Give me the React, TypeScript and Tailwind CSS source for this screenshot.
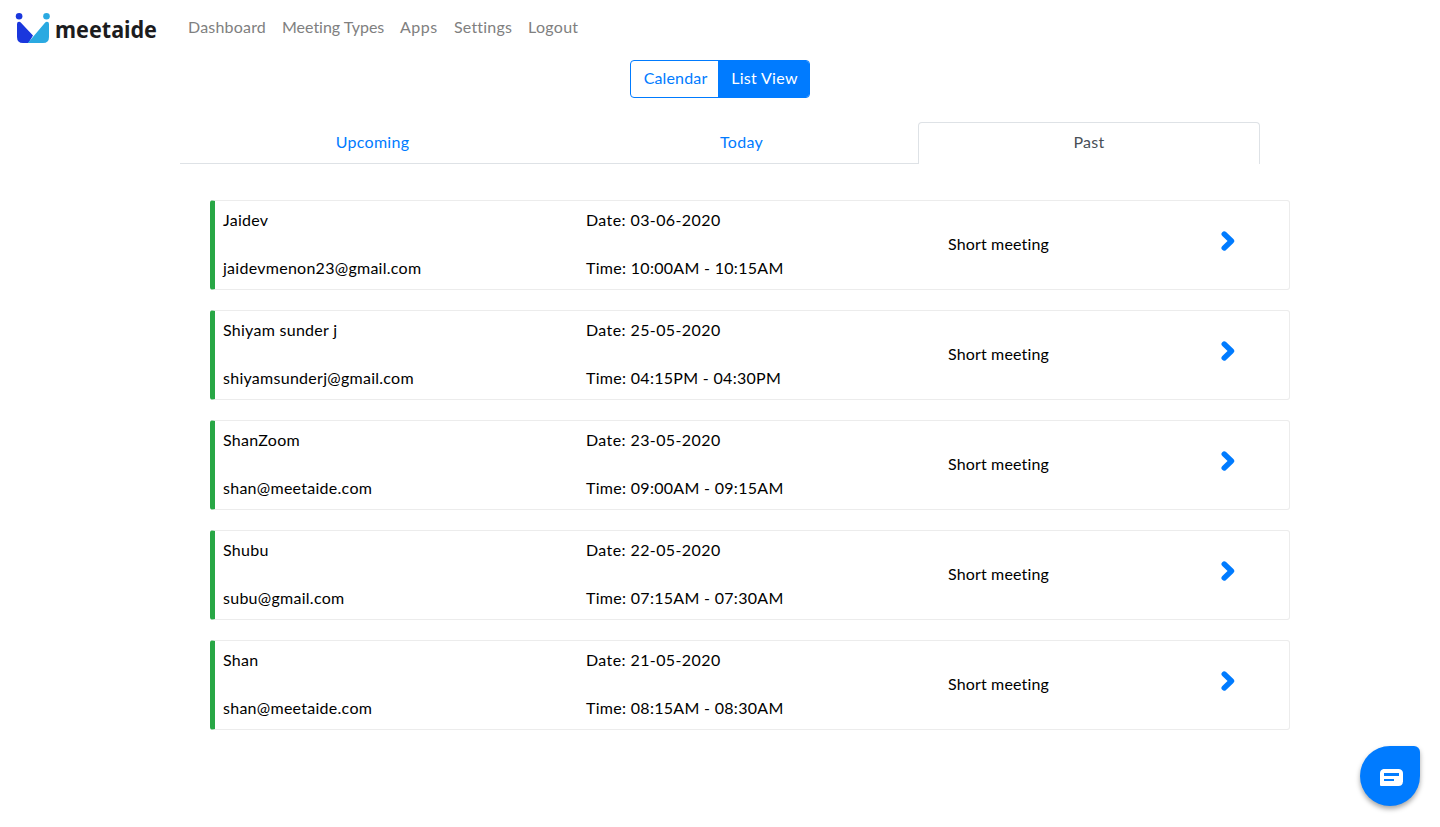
import clsx from "clsx";

const navLinks = [
  { label: "Dashboard", width: "w-[94px] tracking-[0.2px]" },
  { label: "Meeting Types", width: "w-[118px] tracking-[-0.02px]" },
  { label: "Apps", width: "w-[54px] tracking-[0.5px]" },
  { label: "Settings", width: "w-[74px] tracking-[0.2px]" },
  { label: "Logout", width: "w-[66px] tracking-[0.3px]" },
];

const tabs = [
  { label: "Upcoming", width: "w-[385px]" },
  { label: "Today", width: "w-[353px]" },
  { label: "Past", width: "w-[342px]", active: true },
];

const meetings = [
  { name: "Jaidev", email: "jaidevmenon23@gmail.com", date: "03-06-2020", time: "10:00AM - 10:15AM" },
  { name: "Shiyam sunder j", email: "shiyamsunderj@gmail.com", date: "25-05-2020", time: "04:15PM - 04:30PM" },
  { name: "ShanZoom", email: "shan@meetaide.com", date: "23-05-2020", time: "09:00AM - 09:15AM" },
  { name: "Shubu", email: "subu@gmail.com", date: "22-05-2020", time: "07:15AM - 07:30AM" },
  { name: "Shan", email: "shan@meetaide.com", date: "21-05-2020", time: "08:15AM - 08:30AM" },
];

function Logo() {
  return (
    <svg
      width="148"
      height="36"
      viewBox="0 0 148 36"
      className="overflow-visible"
      role="img"
      aria-label="meetaide"
    >
      <circle cx="4.1" cy="6.2" r="3.3" fill="#1a37dd" />
      <circle cx="31.5" cy="6.2" r="3.3" fill="#2aa9e1" />
      <path d="M2 14Q2 11.8 4 11.8Q5.3 11.8 6.2 13L18 25.5L13.5 33H8Q2 33 2 27Z" fill="#1a37dd" />
      <path d="M34 14Q34 11.8 32 11.8Q30.7 11.8 29.8 13L12.8 33H28Q34 33 34 27Z" fill="#2aa9e1" />
      <text
        x="40"
        y="27.5"
        textLength="102"
        lengthAdjust="spacingAndGlyphs"
        fill="#1c1c1e"
        className="font-['Noto_Sans',sans-serif] text-[23px] font-bold tracking-normal"
      >
        meetaide
      </text>
    </svg>
  );
}

function Navbar() {
  return (
    <nav className="flex h-14 items-center pl-[15px]">
      <a href="#" className="mr-[17px]">
        <Logo />
      </a>
      <ul className="flex pb-0.5 text-[#808080]">
        {navLinks.map((link) => (
          <li key={link.label} className={clsx("px-2 whitespace-nowrap", link.width)}>
            <a href="#">{link.label}</a>
          </li>
        ))}
      </ul>
    </nav>
  );
}

function ViewToggle() {
  return (
    <div className="mx-auto mt-1 flex h-[38px] w-[180px] overflow-hidden rounded border border-[#007bff]">
      <button className="w-[87px] pb-0.5 pl-0.5 tracking-[0.15px] text-[#007bff]">Calendar</button>
      <button className="flex-1 bg-[#007bff] pb-0.5 pl-0.5 text-white">List View</button>
    </div>
  );
}

function Tabs() {
  return (
    <div className="mx-auto mt-6 flex h-[42px] w-[1080px]">
      {tabs.map((tab) => (
        <button
          key={tab.label}
          className={clsx(
            "border-[#dee2e6]",
            tab.width,
            tab.active ? "rounded-t border border-b-0 pb-[3px] text-[#495057]" : "border-b pb-px text-[#007bff]"
          )}
        >
          {tab.label}
        </button>
      ))}
    </div>
  );
}

function MeetingCard({ name, email, date, time }: (typeof meetings)[number]) {
  return (
    <div className="flex h-[90px] rounded-[3px] border border-l-[5px] border-[#ececec] border-l-[#28a745] pl-2">
      <div className="flex w-[363px] flex-col gap-6 pt-[7px] tracking-[0.27px]">
        <p>{name}</p>
        <p>{email}</p>
      </div>
      <div className="flex w-[362px] flex-col gap-6 pt-[7px]">
        <p className="tracking-[0.4px]">Date: {date}</p>
        <p>Time: {time}</p>
      </div>
      <p className="w-[273px] pt-[31px] tracking-[0.15px]">Short meeting</p>
      <svg className="mt-[29px]" width="16" height="22" viewBox="0 0 16 22">
        <path
          d="M3.2 4L10.5 11L3.2 18"
          fill="none"
          stroke="#007bff"
          strokeWidth="5.4"
          strokeLinecap="round"
          strokeLinejoin="round"
        />
      </svg>
    </div>
  );
}

function ChatButton() {
  return (
    <button className="fixed right-5 bottom-[21px] flex size-[60px] items-center justify-center rounded-[30px] rounded-tr-[6px] bg-[#007bff] shadow-[0_3px_5px_rgba(0,0,0,0.35)]">
      <svg className="mt-[2px] ml-[3px]" width="23" height="17" viewBox="0 0 23 17">
        <path d="M3.5 0H19Q23 0.5 23 4.5V12.5Q22.5 17 18.5 17H1Q0 17 0 16V3.5Q0.5 0.5 3.5 0Z" fill="#fff" />
        <path d="M4 4H19V7H4ZM4 10H14V12H4Z" fill="#007bff" />
      </svg>
    </button>
  );
}

function App() {
  return (
    <div className="min-h-screen bg-white font-['Lato','Liberation_Sans',sans-serif] text-base tracking-[0.3px] text-black">
      <Navbar />
      <ViewToggle />
      <Tabs />
      <main className="mt-9 ml-[210px] flex w-[1080px] flex-col gap-5">
        {meetings.map((meeting) => (
          <MeetingCard key={meeting.name} {...meeting} />
        ))}
      </main>
      <ChatButton />
    </div>
  );
}

export default App;
